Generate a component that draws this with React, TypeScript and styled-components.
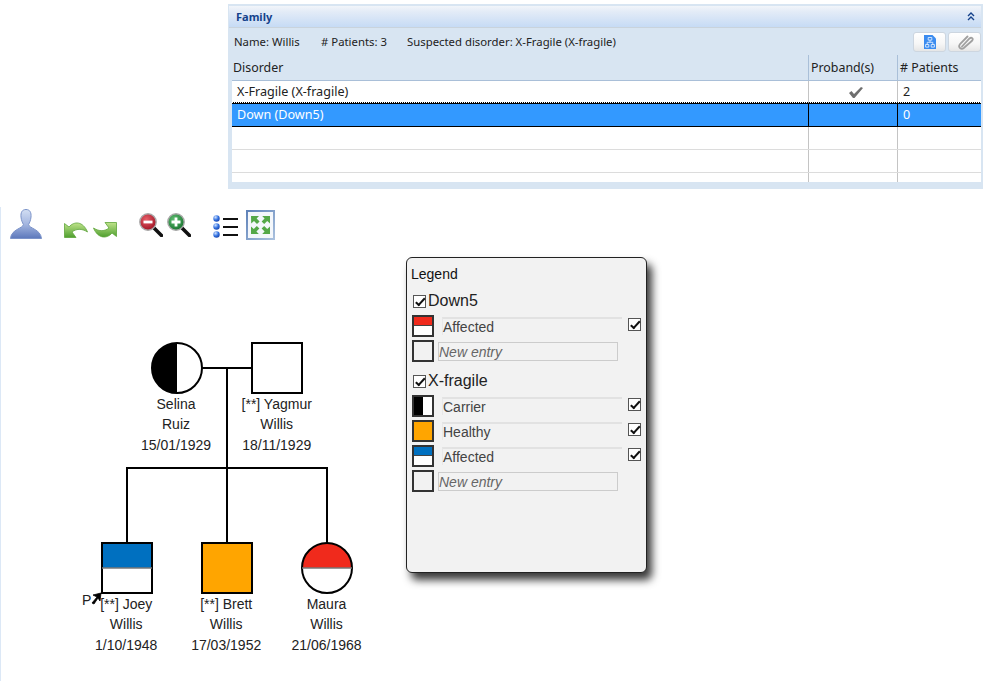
import React from "react";
import styled, { createGlobalStyle } from "styled-components";

const Global = createGlobalStyle`
  html, body { margin: 0; padding: 0; background: #fff; }
  body { font-family: "Noto Sans", "Liberation Sans", sans-serif; }
`;

const Page = styled.div`
  width: 985px;
  height: 681px;
  overflow: hidden;
  display: flex;
  flex-direction: column;
`;

const Panel = styled.section`
  box-sizing: border-box;
  margin: 4px 0 0 228px;
  width: 755px;
  height: 185px;
  background: #d8e5f2;
  padding: 2px 2px 7px 1px;
  display: flex;
  flex-direction: column;
`;

const PanelHeader = styled.header`
  height: 22px;
  flex: none;
  box-sizing: border-box;
  background: linear-gradient(#f2f5fa, #e4ecf7 25%, #c6dbf5);
  border-bottom: 1px solid #c9d3dc;
  display: flex;
  align-items: center;
  justify-content: space-between;
  padding: 0 6px 0 7px;
`;

const PanelTitle = styled.span`
  font: bold 11px "Noto Sans", sans-serif;
  color: #15428b;
`;

const InfoBar = styled.div`
  height: 27px;
  flex: none;
  display: flex;
  align-items: center;
  padding: 0 0 0 5px;
  font-size: 11.35px;
  color: #222;
`;

const InfoItem = styled.span<{ $w: number }>`
  width: ${(p) => p.$w}px;
  flex: none;
  white-space: nowrap;
`;

const ToolButtons = styled.div`
  margin-left: auto;
  display: flex;
  gap: 2px;
  margin-top: 1px;
`;

const ToolButton = styled.div`
  box-sizing: border-box;
  width: 33px;
  height: 20px;
  border: 1px solid #cdd6e0;
  border-radius: 3px;
  background: linear-gradient(#fff, #f6f6f6 60%, #e6e6e6);
  display: flex;
  align-items: center;
  justify-content: center;
`;

const Table = styled.div`
  flex: 1;
  margin: 0 0 0 3px;
  overflow: hidden;
  display: flex;
  flex-direction: column;
`;

const Row = styled.div<{ $kind?: "head" | "selected" | "body" }>`
  box-sizing: border-box;
  flex: none;
  display: grid;
  grid-template-columns: 577px 89px 84px;
  height: ${(p) => (p.$kind === "head" ? "26px" : "23px")};
  background: ${(p) => (p.$kind === "head" ? "#d8e5f2" : p.$kind === "selected" ? "#3399ff" : "#fff")};
  color: ${(p) => (p.$kind === "selected" ? "#fff" : "#222")};
  border-bottom: 1px solid ${(p) => (p.$kind === "head" ? "#a9bfd8" : p.$kind === "selected" ? "#000" : "#dcdcdc")};
  ${(p) => (p.$kind === "selected" ? "outline: 1px dotted #000; outline-offset: 0; border-top: 1px solid #000; margin-top: -1px; height: 24px;" : "")}
`;

const Cell = styled.div<{ $kind?: "head" | "selected" | "body"; $center?: boolean; $last?: boolean; $flush?: boolean }>`
  box-sizing: border-box;
  display: flex;
  align-items: center;
  justify-content: ${(p) => (p.$center ? "center" : "flex-start")};
  padding-left: ${(p) => (p.$flush ? "1px" : p.$kind === "head" ? "2px" : "5px")};
  padding-bottom: ${(p) => (p.$kind === "head" || p.$center ? "0" : "2px")};
  font-size: ${(p) => (p.$kind === "head" ? "12.4px" : "12.6px")};
  border-right: ${(p) =>
    p.$last ? "none" : `1px solid ${p.$kind === "selected" ? "#000" : p.$kind === "head" ? "#a9bfd8" : "#c4c4c4"}`};
  white-space: nowrap;
`;

const Canvas = styled.main`
  position: relative;
  flex: 1;
  margin-top: 18px;
  border-left: 1px solid #dce8f6;
`;

const Toolbar = styled.div`
  display: flex;
  align-items: flex-start;
  padding: 2px 0 0 9px;
`;

const ToolIcon = styled.svg<{ $ml?: number; $mt?: number }>`
  display: block;
  flex: none;
  margin-left: ${(p) => p.$ml ?? 0}px;
  margin-top: ${(p) => p.$mt ?? 0}px;
`;

const Pedigree = styled.svg`
  position: absolute;
  left: -1px;
  top: 0;
  font-family: "Liberation Sans", Arial, sans-serif;
  font-size: 14px;
  fill: #222;
`;

const Legend = styled.aside`
  position: absolute;
  left: 405px;
  top: 50px;
  box-sizing: border-box;
  width: 241px;
  height: 316px;
  background: #f2f2f2;
  border: 1px solid #222;
  border-radius: 6px;
  box-shadow: 5px 7px 8px rgba(0, 0, 0, 0.78);
  padding: 8px 0 0 5px;
  font-family: "Liberation Sans", Arial, sans-serif;
  display: flex;
  flex-direction: column;
`;

const LegendTitle = styled.div`
  font-size: 14px;
  line-height: 17px;
  color: #111;
  margin: 0 0 9px -1px;
`;

const Group = styled.div`
  display: flex;
  align-items: center;
  font-size: 16px;
  line-height: 18px;
  height: 18px;
  color: #222;
  padding-left: 1px;
  margin-bottom: 5px;
`;

const Check = styled.input.attrs({ type: "checkbox", readOnly: true })`
  appearance: none;
  box-sizing: border-box;
  width: 13px;
  height: 13px;
  margin: 0 0 3px;
  flex: none;
  background: #fff;
  border: 1px solid #555;
  position: relative;
  &:checked::after {
    content: "";
    position: absolute;
    left: 3.5px;
    top: 0px;
    width: 3px;
    height: 7.5px;
    border: solid #111;
    border-width: 0 2px 2px 0;
    transform: rotate(42deg);
  }
`;

const GroupCheck = styled(Check)`
  margin: 0 2px 0 0;
`;

const Entry = styled.div`
  display: flex;
  align-items: center;
  height: 22px;
  margin-bottom: 3px;
`;

const Swatch = styled.div<{ $top?: string; $bottom?: string; $left?: string; $right?: string; $split?: "h" | "v" }>`
  box-sizing: border-box;
  width: 22px;
  height: 22px;
  flex: none;
  border: 2px solid #333;
  background: ${(p) =>
    p.$split === "h"
      ? `linear-gradient(${p.$top} 0 45%, #444 45% 50%, ${p.$bottom} 50%)`
      : p.$split === "v"
      ? `linear-gradient(90deg, ${p.$left} 50%, ${p.$right} 50%)`
      : p.$top ?? "#f2f2f2"};
`;

const EntryLabel = styled.div`
  box-sizing: border-box;
  width: 180px;
  height: 18px;
  margin: 0 6px 0 8px;
  border-top: 2px solid #e2e2e2;
  border-left: 1px solid #e8e8e8;
  font-size: 14px;
  line-height: 16px;
  color: #444;
`;

const NewEntry = styled.div`
  box-sizing: border-box;
  width: 180px;
  height: 19px;
  margin: 1px 0 0 4px;
  padding-left: 0;
  border: 1px solid #ccc;
  font-size: 14px;
  font-style: italic;
  line-height: 19px;
  color: #666;
`;

const GroupGap = styled.div`
  height: 7px;
`;

const Circle = ({ cx, cy }: { cx: number; cy: number }) => (
  <circle cx={cx} cy={cy} r={25} fill="none" stroke="#000" strokeWidth={2} />
);

const lineOffsets = [0, 20, 41];

const Label = ({ x, y, lines }: { x: number; y: number; lines: string[] }) => (
  <>
    {lines.map((l, i) => (
      <text key={l} x={x} y={y + lineOffsets[i]} textAnchor="middle">
        {l}
      </text>
    ))}
  </>
);

const rows: { kind: "body" | "selected"; a: string; check?: boolean; n: string }[] = [
  { kind: "body", a: "X-Fragile (X-fragile)", check: true, n: "2" },
  { kind: "selected", a: "Down (Down5)", n: "0" },
  { kind: "body", a: "", n: "" },
  { kind: "body", a: "", n: "" },
  { kind: "body", a: "", n: "" },
];

const Lens = ({ id, c1, c2 }: { id: string; c1: string; c2: string }) => (
  <>
    <defs>
      <radialGradient id={id} cx="0.4" cy="0.35" r="0.7">
        <stop offset="0" stopColor={c1} />
        <stop offset="1" stopColor={c2} />
      </radialGradient>
    </defs>
    <path d="M15 15 L22.5 22.5" stroke="#111" strokeWidth="3.6" strokeLinecap="round" />
    <circle cx="9" cy="9" r="8.2" fill={`url(#${id})`} stroke="#a8a8a8" strokeWidth="1.4" />
  </>
);

const Bullet = ({ cy }: { cy: number }) => <circle cx="3.5" cy={cy} r="3.2" fill="url(#bulletG)" />;

export default function App() {
  return (
    <Page>
      <Global />
      <Panel>
        <PanelHeader>
          <PanelTitle>Family</PanelTitle>
          <svg width="8" height="9" viewBox="0 0 8 9" fill="none" stroke="#15428b" strokeWidth="1.4">
            <path d="M1 4 L4 1 L7 4 M1 8 L4 5 L7 8" />
          </svg>
        </PanelHeader>
        <InfoBar>
          <InfoItem $w={87}>Name: Willis</InfoItem>
          <InfoItem $w={86}># Patients: 3</InfoItem>
          <InfoItem $w={220}>Suspected disorder: X-Fragile (X-fragile)</InfoItem>
          <ToolButtons>
            <ToolButton>
              <svg width="12" height="14" viewBox="0 0 12 14">
                <path d="M0 0H8.5L12 3.5V14H0Z" fill="#3b8cf0" />
                <path d="M4.2 2.5h3.6v2.6H4.2zM1.6 9.5h3.2v2.6H1.6zM7.2 9.5h3.2v2.6H7.2zM6 5.1v2.2M3.2 9.5V7.3h5.6v2.2" fill="none" stroke="#dcecff" strokeWidth="0.9" />
              </svg>
            </ToolButton>
            <ToolButton>
              <svg width="20" height="16" viewBox="0 0 20 16" fill="none">
                <path d="M7 12.5 L14.5 4.5 C16.5 2.6 18.8 4.8 17 6.8 L8.8 14 C6.2 16 2.6 13.2 5 10.2 L12.5 2.5" stroke="#a0a0a0" strokeWidth="1.8" strokeLinecap="round" />
              </svg>
            </ToolButton>
          </ToolButtons>
        </InfoBar>
        <Table>
          <Row $kind="head">
            <Cell $kind="head" $flush>
              Disorder
            </Cell>
            <Cell $kind="head">Proband(s)</Cell>
            <Cell $kind="head" $last>
              # Patients
            </Cell>
          </Row>
          {rows.map((r, i) => (
            <Row key={i} $kind={r.kind}>
              <Cell $kind={r.kind}>{r.a}</Cell>
              <Cell $kind={r.kind} $center>
                {r.check && (
                  <svg width="16" height="13" viewBox="0 0 16 13">
                    <path d="M1 7 L3.5 5 L6 8 L13 1 L15 2 L6.5 12 L5 12 Z" fill="#6f6f6f" />
                  </svg>
                )}
              </Cell>
              <Cell $kind={r.kind} $last>
                {r.n}
              </Cell>
            </Row>
          ))}
        </Table>
      </Panel>
      <Canvas>
        <Pedigree width="985" height="474" viewBox="0 207 985 474">
          <g stroke="#000" strokeWidth="2" fill="none">
            <path d="M202 368H252M227 368V543M126 468H328M127 468V543M327 468V543" />
          </g>
          <path d="M177 343 A25 25 0 0 0 177 393 Z" fill="#000" />
          <Circle cx={177} cy={368} />
          <rect x="252" y="343" width="50" height="50" fill="#fff" stroke="#000" strokeWidth="2" />
          <rect x="102" y="543" width="50" height="25" fill="#0070c0" />
          <rect x="102" y="543" width="50" height="50" fill="none" stroke="#000" strokeWidth="2" />
          <path d="M102 568H152" stroke="#777" strokeWidth="1.5" />
          <rect x="202" y="543" width="50" height="50" fill="#ffa500" stroke="#000" strokeWidth="2" />
          <path d="M302 568 A25 25 0 0 1 352 568 Z" fill="#f02a1c" />
          <Circle cx={327} cy={568} />
          <path d="M302 568H352" stroke="#777" strokeWidth="1.5" />
          <Label x={176} y={409} lines={["Selina", "Ruiz", "15/01/1929"]} />
          <Label x={276.7} y={409} lines={["[**] Yagmur", "Willis", "18/11/1929"]} />
          <Label x={126.2} y={609} lines={["[**] Joey", "Willis", "1/10/1948"]} />
          <Label x={226.2} y={609} lines={["[**] Brett", "Willis", "17/03/1952"]} />
          <Label x={326.5} y={609} lines={["Maura", "Willis", "21/06/1968"]} />
          <text x="82" y="605">P</text>
          <path d="M92 603 L97 597 L93 595 L101 593 L100 601 L98 598 L94 604 Z" fill="#000" stroke="#000" strokeWidth="0.8" />
        </Pedigree>
        <Toolbar>
          <ToolIcon width="32" height="30" viewBox="0 0 32 30">
            <defs>
              <linearGradient id="userG" x1="0" y1="0" x2="0" y2="1">
                <stop offset="0" stopColor="#d3dff3" />
                <stop offset="0.5" stopColor="#a4b6e0" />
                <stop offset="1" stopColor="#5c78bb" />
              </linearGradient>
              <linearGradient id="arrowG" x1="0" y1="0" x2="0" y2="1">
                <stop offset="0" stopColor="#bfe38a" />
                <stop offset="1" stopColor="#4f9f2f" />
              </linearGradient>
              <radialGradient id="bulletG" cx="0.35" cy="0.3" r="0.8">
                <stop offset="0" stopColor="#cfe2ff" />
                <stop offset="0.55" stopColor="#2f6fe0" />
                <stop offset="1" stopColor="#1a3fa0" />
              </radialGradient>
              <linearGradient id="fitG" x1="0" y1="0" x2="1" y2="1">
                <stop offset="0" stopColor="#5f82b8" />
                <stop offset="1" stopColor="#a9c0de" />
              </linearGradient>
            </defs>
            <path d="M16 0.5 C12 0.5 10.6 3.6 11 8 C11.3 11.5 12.4 13.5 13.4 15.5 C13 19.5 1.5 20 0.5 29.5 H31.5 C30.5 20 19 19.5 18.6 15.5 C19.6 13.5 20.7 11.5 21 8 C21.4 3.6 20 0.5 16 0.5 Z" fill="url(#userG)" stroke="#7b93c9" />
          </ToolIcon>
          <ToolIcon width="24" height="16" viewBox="0 0 24 16" $ml={22} $mt={13}>
            <path d="M0.5 15.5 V1.5 L5 5 C10 -1 19 -1 23.5 10 C19 7 13 6 8 10 L12 15.5 Z" fill="url(#arrowG)" stroke="#5ea53a" strokeWidth="0.8" />
          </ToolIcon>
          <ToolIcon width="24" height="16" viewBox="0 0 24 16" $ml={5} $mt={13}>
            <path d="M23.5 0.5 V14.5 L19 11 C14 17 5 17 0.5 6 C5 9 11 10 16 6 L12 0.5 Z" fill="url(#arrowG)" stroke="#5ea53a" strokeWidth="0.8" />
          </ToolIcon>
          <ToolIcon width="24" height="24" viewBox="0 0 24 24" $ml={22} $mt={4}>
            <Lens id="lensR" c1="#e8606a" c2="#9c1020" />
            <rect x="4.5" y="7.6" width="9" height="2.8" fill="#fff" />
          </ToolIcon>
          <ToolIcon width="24" height="24" viewBox="0 0 24 24" $ml={4} $mt={4}>
            <Lens id="lensG" c1="#62c074" c2="#15702c" />
            <path d="M4.5 9H13.5M9 4.5V13.5" stroke="#fff" strokeWidth="2.8" />
          </ToolIcon>
          <ToolIcon width="25" height="23" viewBox="0 0 25 23" $ml={22} $mt={6}>
            <Bullet cy={3.5} />
            <Bullet cy={11.5} />
            <Bullet cy={19.5} />
            <path d="M10 4H25M10 12H25M10 20H25" stroke="#111" strokeWidth="2" />
          </ToolIcon>
          <ToolIcon width="29" height="30" viewBox="0 0 29 30" $ml={8} $mt={1}>
            <rect x="1" y="1" width="27" height="28" fill="#f4f7fb" stroke="url(#fitG)" strokeWidth="2" />
            <path d="M5 6h8l-2.4 2.4 3 3-2.6 2.6-3-3L5.2 13.4zM24 6v7.4l-2.8-2.4-3 3-2.6-2.6 3-3L16.2 6zM5 24v-7.4l2.8 2.4 3-3 2.6 2.6-3 3 2.4 2.4zM24 24h-7.8l2.4-2.4-3-3 2.6-2.6 3 3 2.8-2.4z" fill="#55a848" />
          </ToolIcon>
        </Toolbar>
        <Legend>
          <LegendTitle>Legend</LegendTitle>
          <Group>
            <GroupCheck defaultChecked />
            Down5
          </Group>
          <Entry>
            <Swatch $split="h" $top="#f02a1c" $bottom="#fff" />
            <EntryLabel>Affected</EntryLabel>
            <Check defaultChecked />
          </Entry>
          <Entry>
            <Swatch />
            <NewEntry>New entry</NewEntry>
          </Entry>
          <GroupGap />
          <Group>
            <GroupCheck defaultChecked />
            X-fragile
          </Group>
          <Entry>
            <Swatch $split="v" $left="#000" $right="#fff" />
            <EntryLabel>Carrier</EntryLabel>
            <Check defaultChecked />
          </Entry>
          <Entry>
            <Swatch $top="#ffa500" />
            <EntryLabel>Healthy</EntryLabel>
            <Check defaultChecked />
          </Entry>
          <Entry>
            <Swatch $split="h" $top="#0070c0" $bottom="#fff" />
            <EntryLabel>Affected</EntryLabel>
            <Check defaultChecked />
          </Entry>
          <Entry>
            <Swatch />
            <NewEntry>New entry</NewEntry>
          </Entry>
        </Legend>
      </Canvas>
    </Page>
  );
}
